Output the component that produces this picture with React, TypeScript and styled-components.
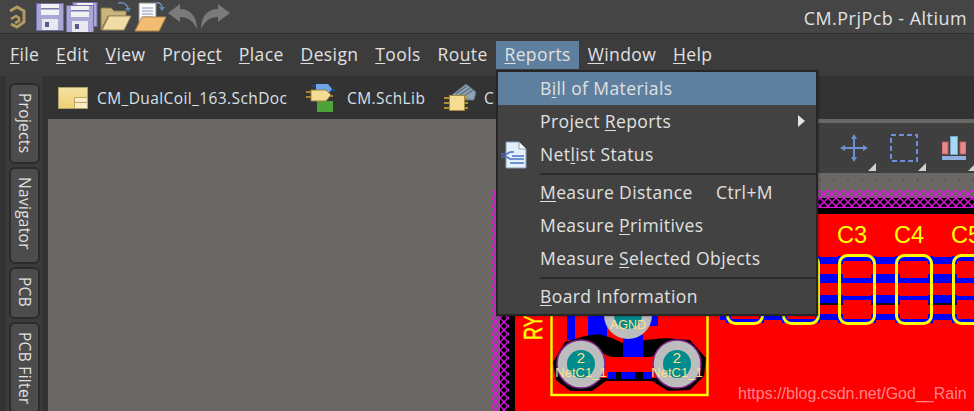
import React from "react";
import styled, { createGlobalStyle } from "styled-components";

const Global = createGlobalStyle`
  html, body { margin: 0; padding: 0; background: #333; }
  * { box-sizing: border-box; }
  u { text-underline-offset: 2px; text-decoration-thickness: 1px; }
`;

const Root = styled.div`
  position: relative;
  width: 974px;
  height: 411px;
  overflow: hidden;
  display: flex;
  flex-direction: column;
  font-family: "Open Sans", "Noto Sans", sans-serif;
  color: #dcdcdc;
  background: #333;
`;
const TitleBar = styled.div`
  height: 34px;
  flex: none;
  background: #454545;
  border-bottom: 1px solid #2e2e2e;
  display: flex;
  align-items: center;
  justify-content: space-between;
  padding: 0 7px 0 8px;
`;
const QuickIcons = styled.div`
  display: flex;
  align-items: center;
  gap: 2px;
`;
const LogoSlot = styled.div`
  width: 26px;
  display: flex;
`;
const Title = styled.div`
  font-size: 17.9px;
  letter-spacing: 0.5px;
  color: #e2e2e2;
  margin-top: 2px;
`;
const MenuBar = styled.div`
  height: 42px;
  flex: none;
  background: #3c3c3c;
  display: flex;
  align-items: center;
  padding: 0 0 0 1.6px;
`;
const MenuItem = styled.div<{ $active?: boolean }>`
  height: 28px;
  padding: 0 8.4px 2px;
  display: flex;
  align-items: center;
  font-size: 17.5px;
  letter-spacing: 0.4px;
  color: #e0e0e0;
  background: ${(p) => (p.$active ? "#5f7f9f" : "transparent")};
`;
const Body = styled.div`
  flex: 1;
  display: flex;
  min-height: 0;
`;
const Rail = styled.div`
  width: 36px;
  margin: 0 6px;
  padding: 7px 3px 0;
  background: #3b3b3b;
  display: flex;
  flex-direction: column;
  gap: 3px;
  flex: none;
`;
const SideTab = styled.div<{ $h: number }>`
  height: ${(p) => p.$h}px;
  flex: none;
  width: 31px;
  background: #4c4c4c;
  border: 2px solid #2b2b2b;
  border-radius: 6px;
  writing-mode: vertical-rl;
  font-size: 15.5px;
  letter-spacing: 0.3px;
  color: #e0e0e0;
  display: flex;
  align-items: center;
  padding-top: 8px;
`;
const Main = styled.div`
  flex: 1;
  display: flex;
  flex-direction: column;
  min-width: 0;
`;
const DocTabs = styled.div`
  height: 43px;
  flex: none;
  margin-left: -6px;
  background: #333;
  display: flex;
  align-items: center;
  padding-left: 16px;
`;
const DocTab = styled.div<{ $w: number; $gap: number }>`
  width: ${(p) => p.$w}px;
  flex: none;
  display: flex;
  align-items: center;
  gap: ${(p) => p.$gap}px;
  font-size: 15.5px;
  letter-spacing: 0.4px;
  color: #d8e0e8;
  white-space: nowrap;
`;
const ActiveTabEnd = styled.div`
  width: 200px;
  height: 36px;
  margin-top: 7px;
  margin-left: -16px;
  background: #555;
  border: 2px solid #2b2b2b;
  border-radius: 6px;
  flex: none;
`;
const Workspace = styled.div`
  flex: 1;
  display: flex;
  background: #6b6765;
  min-height: 0;
`;
const EmptyCanvas = styled.div`
  width: 442px;
  flex: none;
`;
const PcbColumn = styled.div`
  flex: 1;
  display: flex;
  flex-direction: column;
  min-width: 0;
`;
const Toolbar = styled.div`
  height: 50px;
  flex: none;
  margin: 4px -2px 0 7px;
  background: #3f3f3f;
  display: flex;
  justify-content: flex-end;
  align-items: center;
  gap: 12px;
`;
const ToolButton = styled.div<{ $inset: number }>`
  position: relative;
  width: 38px;
  height: 50px;
  flex: none;
  padding-left: ${(p) => p.$inset}px;
  display: flex;
  align-items: center;
`;
const Corner = styled.span`
  position: absolute;
  right: 0;
  bottom: 2px;
  width: 0;
  height: 0;
  border-left: 8px solid transparent;
  border-bottom: 8px solid #d0d0d0;
`;
const Board = styled.svg`
  display: block;
  flex: 1;
  width: 484px;
  height: 238px;
`;
const Dropdown = styled.div`
  position: absolute;
  left: 496px;
  top: 70px;
  width: 322px;
  height: 246px;
  background: #424242;
  border: 2px solid #262626;
  box-shadow: 1px 1px 2px rgba(0, 0, 0, 0.25);
`;
const Row = styled.div<{ $hot?: boolean }>`
  position: relative;
  height: 33px;
  display: flex;
  align-items: center;
  padding: 0 0 2px 42px;
  font-size: 17.5px;
  letter-spacing: 0.4px;
  color: #e0e0e0;
  background: ${(p) => (p.$hot ? "#5f7f9f" : "transparent")};
`;
const RowIcon = styled.span`
  position: absolute;
  left: 2px;
  top: 3px;
  display: flex;
`;
const Shortcut = styled.span`
  position: absolute;
  left: 218px;
`;
const SubArrow = styled.span`
  position: absolute;
  left: 300px;
  top: 10px;
  width: 0;
  height: 0;
  border-left: 7px solid #e4e4e4;
  border-top: 6px solid transparent;
  border-bottom: 6px solid transparent;
`;
const Sep = styled.div`
  height: 2px;
  margin: 2px 0 1px 42px;
  background: #2b2b2b;
`;

const Logo = () => (
  <svg width="18" height="24" viewBox="0 0 18 24" fill="none" stroke="#b39a63" strokeWidth="3">
    <path d="M2 6 L9 2 L16 6 V17 L9 22 L3 19" />
    <path d="M3 14 L8 11 L11 13 V16 L7 18" strokeWidth="2.6" />
  </svg>
);
const Floppy = () => (
  <>
    <rect x="0.5" y="0.5" width="27" height="27" fill="#aaa6d6" stroke="#6f6ca6" />
    <rect x="5" y="1" width="18" height="11" fill="#f2f2f2" />
    <rect x="5" y="5" width="18" height="1.5" fill="#7b7ab0" />
    <rect x="6" y="16" width="16" height="11" fill="#e8e8ee" />
    <rect x="9" y="19" width="4" height="5" fill="#5a5a90" />
  </>
);
const Save = () => (
  <svg width="28" height="28" viewBox="0 0 28 28"><Floppy /></svg>
);
const SaveAll = () => (
  <svg width="32" height="30" viewBox="0 0 32 30">
    <rect x="7" y="0.5" width="24" height="24" fill="#aaa6d6" stroke="#6f6ca6" />
    <rect x="11" y="1" width="16" height="6" fill="#f2f2f2" />
    <g transform="translate(0,3)"><Floppy /></g>
  </svg>
);
const Open = () => (
  <svg width="32" height="30" viewBox="0 0 32 30">
    <path d="M1 28 V6 H11 L14 9 H26 V14 H8 Z" fill="#c9b47c" stroke="#8d7c50" />
    <path d="M2 28 L9 14 H31 L24 28 Z" fill="#f1dca6" stroke="#a08c5a" />
    <path d="M18 1 C23 0 27 2 28 6" fill="none" stroke="#6f8fb8" strokeWidth="1.5" />
    <path d="M25 6 H31 L28 10 Z" fill="#5f86b6" />
  </svg>
);
const OpenDoc = () => (
  <svg width="32" height="30" viewBox="0 0 32 30">
    <path d="M5 1 H22 V24 H5 Z" fill="#fafafa" stroke="#8a8a8a" />
    <path d="M8 6 H19 M8 9 H19 M8 12 H19 M8 15 H19" stroke="#8a93b8" />
    <path d="M1 29 L8 15 H32 L25 29 Z" fill="#f0bd73" stroke="#b5874a" />
    <path d="M22 1 C26 0 28 3 28 6" fill="none" stroke="#6f8fb8" strokeWidth="1.5" />
    <path d="M25 5 H31 L28 9 Z" fill="#5f86b6" />
  </svg>
);
const Undo = ({ flip }: { flip?: boolean }) => (
  <svg width="30" height="26" viewBox="0 0 30 26" style={flip ? { transform: "scaleX(-1)" } : undefined}>
    <path d="M0 9 L12 0 V5 C22 5 29 12 29 25 C25 17 20 13 12 13 V18 Z" fill="#7a7a7a" />
  </svg>
);
const SchDocIcon = () => (
  <svg width="30" height="22" viewBox="0 0 30 22">
    <defs>
      <linearGradient id="sd" x1="0" y1="0" x2="0" y2="1">
        <stop offset="0" stopColor="#f3e3a2" />
        <stop offset="1" stopColor="#f0cf70" />
      </linearGradient>
    </defs>
    <rect x="0.5" y="0.5" width="29" height="21" fill="url(#sd)" stroke="#b0a070" />
    <path d="M16.5 10.5 H29.5 M16.5 15.5 H29.5 M16.5 10.5 V21.5" stroke="#bda665" fill="none" />
    <rect x="17" y="11" width="12" height="4" fill="#f9edc2" />
    <rect x="17" y="16" width="12" height="5" fill="#f9edc2" />
  </svg>
);
const SchLibIcon = () => (
  <svg width="30" height="30" viewBox="0 0 30 30">
    <path d="M6 3 H10 M24 7 H29" stroke="#1f4f9f" strokeWidth="1.5" />
    <path d="M10 1 H22 L26 6 L22 11 H10 Z" fill="#6ea4e8" />
    <rect x="11" y="18" width="16" height="11" fill="#4da33a" />
    <path d="M0 9 H6 M0 14 H6 M24 13 H27" stroke="#a8852c" strokeWidth="2" />
    <path d="M5 7 H20 L25 12 L20 18 H5 Z" fill="#f4dc94" stroke="#9a8040" />
  </svg>
);
const CmpIcon = () => (
  <svg width="32" height="30" viewBox="0 0 32 30">
    <path d="M8 12 L22 1 L32 9 L30 17 H10 Z" fill="#8ea2b4" stroke="#5f6f7f" />
    <path d="M12 11 L23 3 M16 12 L26 5 M20 13 L29 7" stroke="#5f7080" strokeWidth="1.5" />
    <path d="M0 15 H6 M0 20 H6 M0 25 H6 M20 15 H24 M20 20 H24 M20 25 H24" stroke="#b09030" strokeWidth="2" />
    <rect x="5.5" y="12.5" width="15" height="15" fill="#f5dc90" stroke="#a58a40" />
  </svg>
);
const MoveIcon = () => (
  <svg width="28" height="28" viewBox="0 0 28 28" fill="#6f8fd4">
    <path d="M13 4 H15 V13 H24 V15 H15 V24 H13 V15 H4 V13 H13 Z" />
    <path d="M14 0 L17 5 H11 Z M14 28 L17 23 H11 Z M0 14 L5 11 V17 Z M28 14 L23 11 V17 Z" />
  </svg>
);
const DashIcon = () => (
  <svg width="28" height="28" viewBox="0 0 28 28">
    <rect x="1" y="1" width="26" height="26" fill="none" stroke="#6f8fd8" strokeWidth="2" strokeDasharray="5 3" />
  </svg>
);
const AlignIcon = () => (
  <svg width="24" height="24" viewBox="0 0 24 24">
    <rect x="0" y="6" width="6" height="12" fill="#e88a8a" stroke="#c06060" />
    <rect x="8.5" y="0.5" width="7" height="18" fill="#a8d8f0" stroke="#70a8d0" />
    <rect x="18" y="6" width="6" height="12" fill="#e88a8a" stroke="#c06060" />
    <rect x="0" y="20" width="24" height="4" fill="#8fb0e0" />
  </svg>
);
const NetIcon = () => (
  <svg width="28" height="28" viewBox="0 0 28 28">
    <path d="M6 1 H19 L26 8 V27 H6 Z" fill="#e4f0fa" stroke="#8a9ab0" />
    <path d="M19 1 V8 H26" fill="#fff" stroke="#8a9ab0" />
    <path d="M1 13 H7 L10 11 H14 M1 16 H7 L10 18 H24 M12 15 H24 M10 22 H24" stroke="#4a72c8" strokeWidth="1.6" fill="none" />
  </svg>
);

const xCaps = [726, 782, 838, 895, 952];
const outerBands = [
  [257, 7],
  [274, 9],
  [295, 8],
  [314, 6],
];
const innerBands = [
  [256, 5],
  [278, 5],
  [296, 4],
  [319, 4],
];

const Pcb = () => (
  <Board viewBox="490 173 484 238">
    <defs>
      <pattern id="hatch" x="492" y="190" width="8" height="8" patternUnits="userSpaceOnUse">
        <path d="M0 0 L8 8 M8 0 L0 8" stroke="#e010e0" strokeWidth="1.4" />
      </pattern>
    </defs>
    <rect x="490" y="173" width="484" height="238" fill="#6b6765" />
    {Array.from({ length: 35 }, (_, i) => (
      <rect key={i} x={500 + i * 13.9} y={180} width="1" height="1" fill="#333" />
    ))}
    <rect x="492" y="190" width="482" height="221" fill="url(#hatch)" />
    <rect x="500" y="198" width="474" height="213" fill="#000" />
    <rect x="500" y="198" width="474" height="9" fill="url(#hatch)" />
    <rect x="500" y="198" width="9" height="213" fill="url(#hatch)" />
    <rect x="509" y="207" width="465" height="1" fill="#e010e0" />
    <rect x="515" y="214" width="459" height="197" fill="#f00" />

    {outerBands.map(([y, h]) => (
      <rect key={y} x="720" y={y} width="254" height={h} fill="#00f" />
    ))}
    <rect x="720" y="303" width="254" height="2" fill="#111" />
    {xCaps.map((x) => (
      <g key={x}>
        <rect x={x + 5} y="254" width="28" height="70" fill="#f00" />
        {innerBands.map(([y, h]) => (
          <rect key={y} x={x} y={y} width="38" height={h} fill="#00f" />
        ))}
        <rect x={x + 1.5} y="255.5" width="35" height="68" rx="8" fill="none" stroke="#ff0" strokeWidth="3" />
      </g>
    ))}
    {["C3", "C4", "C5"].map((t, i) => (
      <text key={t} x={837 + i * 57} y="243" fontFamily="Liberation Sans" fontSize="23.5" fill="#ff0">{t}</text>
    ))}

    <rect x="567" y="312" width="8" height="28" fill="#00f" />
    <rect x="588" y="312" width="19" height="28" fill="#00f" />
    <rect x="650" y="312" width="8" height="14" fill="#00f" />
    <path d="M598 334 L612 338 L627 345 L645 340 L665 338 L690 340 L706 358 L704 376 L690 390 L668 391 L652 381 H606 L592 391 L570 391 L556 380 L553 362 L565 342 L585 336 Z" fill="#000" />
    <rect x="623" y="335" width="20" height="23" fill="#00f" />
    <path d="M600 350 C606 357 612 357 620 357 H648 C654 357 658 355 662 350 L662 378 H600 Z" fill="#f00" />
    <rect x="608" y="372" width="44" height="7" fill="#00f" />
    <rect x="616" y="372" width="5" height="7" fill="#000" />
    <rect x="635" y="372" width="8" height="7" fill="#000" />

    <rect x="551.5" y="300" width="156" height="95" fill="none" stroke="#ff0" strokeWidth="2.4" />
    <g>
      <circle cx="628" cy="315" r="24" fill="#bdbdbd" />
      <circle cx="628" cy="315" r="14" fill="#008c8c" />
      <text x="628" y="329" textAnchor="middle" fontFamily="Liberation Sans" fontSize="12.5" fill="#ffe08c">AGND</text>
    </g>
    {[581, 677].map((cx) => (
      <g key={cx}>
        <circle cx={cx} cy="364" r="24" fill="#bdbdbd" stroke="#80208a" strokeWidth="1.5" />
        <circle cx={cx} cy="364" r="14" fill="#008c8c" />
        <text x={cx} y="363" textAnchor="middle" fontFamily="Liberation Sans" fontSize="15" fill="#ffe08c">2</text>
        <text x={cx} y="377" textAnchor="middle" fontFamily="Liberation Sans" fontSize="13" fill="#ffe08c">NetC1_1</text>
      </g>
    ))}
    <text transform="translate(542 340) rotate(-90) scale(0.72 1)" fontFamily="Liberation Sans" fontSize="25" fill="#ff0" stroke="#ff0" strokeWidth="0.5">RY</text>
    <text x="738" y="399" fontFamily="Liberation Sans" fontSize="16" fill="rgba(255,220,220,.62)">https://blog.csdn.net/God__Rain</text>
  </Board>
);

export default function App() {
  return (
    <Root>
      <Global />
      <TitleBar>
        <QuickIcons>
          <LogoSlot><Logo /></LogoSlot>
          <Save />
          <SaveAll />
          <Open />
          <OpenDoc />
          <Undo />
          <Undo flip />
        </QuickIcons>
        <Title>CM.PrjPcb - Altium</Title>
      </TitleBar>
      <MenuBar>
        <MenuItem><span><u>F</u>ile</span></MenuItem>
        <MenuItem><span><u>E</u>dit</span></MenuItem>
        <MenuItem><span><u>V</u>iew</span></MenuItem>
        <MenuItem><span>Proje<u>c</u>t</span></MenuItem>
        <MenuItem><span><u>P</u>lace</span></MenuItem>
        <MenuItem><span><u>D</u>esign</span></MenuItem>
        <MenuItem><span><u>T</u>ools</span></MenuItem>
        <MenuItem><span>Ro<u>u</u>te</span></MenuItem>
        <MenuItem $active><span><u>R</u>eports</span></MenuItem>
        <MenuItem><span><u>W</u>indow</span></MenuItem>
        <MenuItem><span><u>H</u>elp</span></MenuItem>
      </MenuBar>
      <Body>
        <Rail>
          <SideTab $h={81}>Projects</SideTab>
          <SideTab $h={97}>Navigator</SideTab>
          <SideTab $h={52}>PCB</SideTab>
          <SideTab $h={92}>PCB Filter</SideTab>
        </Rail>
        <Main>
          <DocTabs>
            <DocTab $w={248} $gap={9}><SchDocIcon />CM_DualCoil_163.SchDoc</DocTab>
            <DocTab $w={138} $gap={11}><SchLibIcon />CM.SchLib</DocTab>
            <DocTab $w={170} $gap={8}><CmpIcon />C</DocTab>
            <ActiveTabEnd />
          </DocTabs>
          <Workspace>
            <EmptyCanvas />
            <PcbColumn>
              <Toolbar>
                <ToolButton $inset={2}><MoveIcon /><Corner /></ToolButton>
                <ToolButton $inset={2}><DashIcon /><Corner /></ToolButton>
                <ToolButton $inset={4}><AlignIcon /><Corner /></ToolButton>
              </Toolbar>
              <Pcb />
            </PcbColumn>
          </Workspace>
        </Main>
      </Body>
      <Dropdown>
        <Row $hot><span>B<u>i</u>ll of Materials</span></Row>
        <Row><span>Project <u>R</u>eports</span><SubArrow /></Row>
        <Row><RowIcon><NetIcon /></RowIcon><span>Net<u>l</u>ist Status</span></Row>
        <Sep />
        <Row><span><u>M</u>easure Distance</span><Shortcut>Ctrl+M</Shortcut></Row>
        <Row><span>Measure <u>P</u>rimitives</span></Row>
        <Row><span>Measure <u>S</u>elected Objects</span></Row>
        <Sep />
        <Row><span><u>B</u>oard Information</span></Row>
      </Dropdown>
    </Root>
  );
}
